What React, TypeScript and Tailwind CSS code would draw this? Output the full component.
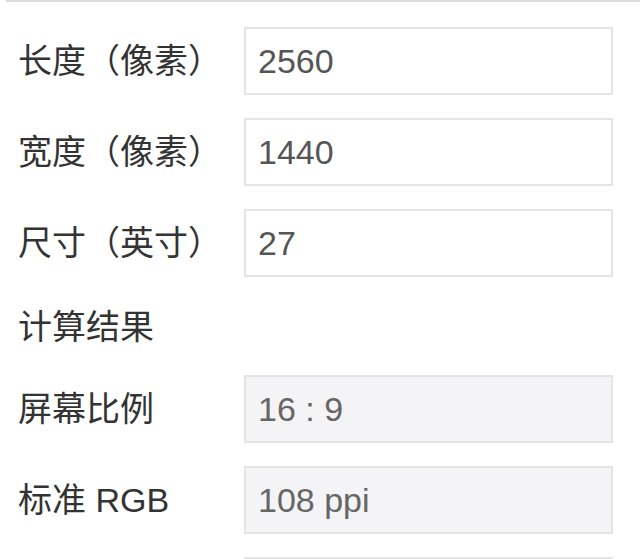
import React from "react";

const font = { fontFamily: '"Liberation Sans", "Noto Sans CJK SC", sans-serif' };

function Row({ label, value, disabled }: { label: string; value: string; disabled?: boolean }) {
  return (
    <div className="flex items-center h-[68px]">
      <div className="w-[226px] shrink-0 text-[34px] leading-none text-[#333333]">{label}</div>
      <div
        className={
          "w-[369px] h-[68px] flex items-center pl-[12px] border-2 border-[#e4e4e4] text-[34px] leading-none " +
          (disabled ? "bg-[#f4f4f6] text-[#666666]" : "bg-white text-[#555555]")
        }
      >
        {value}
      </div>
    </div>
  );
}

export default function App() {
  return (
    <div className="w-[640px] h-[559px] overflow-hidden bg-white relative" style={font}>
      <div className="ml-[6px] h-[2px] bg-[#dcdcdc]" />
      <div className="pl-[18px] pt-[25px] flex flex-col">
        <div className="flex flex-col gap-[23px]">
          <Row label="长度（像素）" value="2560" />
          <Row label="宽度（像素）" value="1440" />
          <Row label="尺寸（英寸）" value="27" />
        </div>
        <div className="mt-[33px] h-[34px] flex items-center text-[34px] leading-none text-[#333333]">计算结果</div>
        <div className="mt-[31px] flex flex-col gap-[23px]">
          <Row label="屏幕比例" value="16 : 9" disabled />
          <Row label="标准 RGB" value="108 ppi" disabled />
          <Row label="" value="" disabled />
        </div>
      </div>
    </div>
  );
}
